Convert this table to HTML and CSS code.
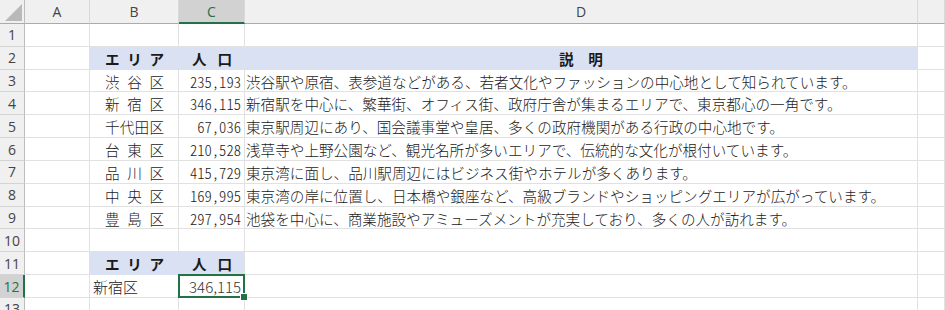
FILE: index.html
```html
<!DOCTYPE html>
<html lang="ja">
<head>
  <meta charset="UTF-8">
  <title>東京の区 - Sheet1</title>
  <link rel="stylesheet" href="styles.css">
</head>
<body>
  <div class="sheet">
    <!-- column headings -->
    <div class="corner"></div>
    <div class="colhead">A</div>
    <div class="colhead">B</div>
    <div class="colhead sel">C</div>
    <div class="colhead">D</div>
    <div class="colhead"></div>

    <div class="rowhead">1</div>
    <div class="cell"></div><div class="cell"></div><div class="cell"></div><div class="cell"></div><div class="cell"></div>

    <div class="rowhead">2</div>
    <div class="cell"></div>
    <div class="cell fill head dist"><span>エ</span><span>リ</span><span>ア</span></div>
    <div class="cell fill head dist num"><span>人</span><span>口</span></div>
    <div class="cell fill head center end">説　明</div>
    <div class="cell"></div>

    <div class="rowhead">3</div>
    <div class="cell"></div>
    <div class="cell dist"><span>渋</span><span>谷</span><span>区</span></div>
    <div class="cell right mono">235,193</div>
    <div class="cell text">渋谷駅や原宿、表参道などがある、若者文化やファッションの中心地として知られています。</div>
    <div class="cell"></div>

    <div class="rowhead">4</div>
    <div class="cell"></div>
    <div class="cell dist"><span>新</span><span>宿</span><span>区</span></div>
    <div class="cell right mono">346,115</div>
    <div class="cell text">新宿駅を中心に、繁華街、オフィス街、政府庁舎が集まるエリアで、東京都心の一角です。</div>
    <div class="cell"></div>

    <div class="rowhead">5</div>
    <div class="cell"></div>
    <div class="cell dist"><span>千</span><span>代</span><span>田</span><span>区</span></div>
    <div class="cell right mono">67,036</div>
    <div class="cell text">東京駅周辺にあり、国会議事堂や皇居、多くの政府機関がある行政の中心地です。</div>
    <div class="cell"></div>

    <div class="rowhead">6</div>
    <div class="cell"></div>
    <div class="cell dist"><span>台</span><span>東</span><span>区</span></div>
    <div class="cell right mono">210,528</div>
    <div class="cell text">浅草寺や上野公園など、観光名所が多いエリアで、伝統的な文化が根付いています。</div>
    <div class="cell"></div>

    <div class="rowhead">7</div>
    <div class="cell"></div>
    <div class="cell dist"><span>品</span><span>川</span><span>区</span></div>
    <div class="cell right mono">415,729</div>
    <div class="cell text">東京湾に面し、品川駅周辺にはビジネス街やホテルが多くあります。</div>
    <div class="cell"></div>

    <div class="rowhead">8</div>
    <div class="cell"></div>
    <div class="cell dist"><span>中</span><span>央</span><span>区</span></div>
    <div class="cell right mono">169,995</div>
    <div class="cell text">東京湾の岸に位置し、日本橋や銀座など、高級ブランドやショッピングエリアが広がっています。</div>
    <div class="cell"></div>

    <div class="rowhead">9</div>
    <div class="cell"></div>
    <div class="cell dist"><span>豊</span><span>島</span><span>区</span></div>
    <div class="cell right mono">297,954</div>
    <div class="cell text">池袋を中心に、商業施設やアミューズメントが充実しており、多くの人が訪れます。</div>
    <div class="cell"></div>

    <div class="rowhead">10</div>
    <div class="cell"></div><div class="cell"></div><div class="cell"></div><div class="cell"></div><div class="cell"></div>

    <div class="rowhead">11</div>
    <div class="cell"></div>
    <div class="cell fill head dist"><span>エ</span><span>リ</span><span>ア</span></div>
    <div class="cell fill head dist num end"><span>人</span><span>口</span></div>
    <div class="cell"></div>
    <div class="cell"></div>

    <div class="rowhead sel">12</div>
    <div class="cell"></div>
    <div class="cell plain">新宿区</div>
    <div class="cell plain right active">346,115</div>
    <div class="cell"></div>
    <div class="cell"></div>

    <div class="rowhead">13</div>
    <div class="cell"></div><div class="cell"></div><div class="cell"></div><div class="cell"></div><div class="cell"></div>
  </div>
</body>
</html>
```

FILE: styles.css
```css
* {
  box-sizing: border-box;
}
body {
  margin: 0;
  background: #fff;
  overflow: hidden;
}
.sheet {
  display: grid;
  grid-template-columns: 25px 65px 89px 66px 673px 1fr;
  grid-template-rows: 24px;
  grid-auto-rows: 22.83px;
  width: 945px;
  height: 310px;
  overflow: hidden;
  font-family: "Noto Sans CJK JP", sans-serif;
  font-size: 14.6px;
  color: #1a1a1a;
}
.cell {
  display: flex;
  align-items: center;
  padding: 1px 2px 0;
  border-right: 1px solid #e1e1e1;
  border-bottom: 1px solid #e1e1e1;
  white-space: nowrap;
  font-weight: 300;
}
.corner,
.colhead,
.rowhead {
  display: flex;
  align-items: center;
  justify-content: center;
  background: #f0f0f0;
  font-family: "Open Sans", "Noto Sans", sans-serif;
  font-size: 14px;
  color: #444;
}
.corner {
  position: relative;
  border-right: 1px solid #bdbdbd;
  border-bottom: 1px solid #ababab;
}
.corner::after {
  content: "";
  position: absolute;
  right: 2px;
  bottom: 2px;
  width: 17px;
  height: 17px;
  background: #b9b9b9;
  clip-path: polygon(100% 0, 100% 100%, 0 100%);
}
.colhead {
  border-right: 1px solid #d9d9d9;
  border-bottom: 1px solid #ababab;
}
.colhead.sel {
  background: #d2d2d2;
  color: #217346;
  border-bottom: 2px solid #217346;
}
.rowhead {
  border-right: 1px solid #bdbdbd;
  border-bottom: 1px solid #d4d4d4;
}
.rowhead.sel {
  background: #d2d2d2;
  color: #217346;
  border-right: 2px solid #217346;
}
.fill {
  background: #d9e1f2;
  border-right-color: #d9e1f2;
  border-bottom-color: #d9e1f2;
}
.fill.end {
  border-right-color: #e1e1e1;
}
.head {
  font-weight: 700;
}
.dist {
  justify-content: space-between;
  padding-left: 15px;
  padding-right: 14px;
}
.dist.num {
  padding-left: 13px;
  padding-right: 12px;
}
.center {
  justify-content: center;
}
.right {
  justify-content: flex-end;
}
.mono {
  font-feature-settings: "hwid" 1;
  padding-right: 3px;
}
.text {
  padding-left: 1px;
}
.plain {
  font-weight: 300;
  font-size: 15px;
  padding-left: 3px;
}
.active {
  position: relative;
  padding-right: 3px;
  color: #333;
}
.active::before {
  content: "";
  position: absolute;
  top: -1px;
  left: -1px;
  right: -1px;
  bottom: -1px;
  border: 2px solid #217346;
}
.active::after {
  content: "";
  position: absolute;
  right: -4px;
  bottom: -4px;
  width: 6px;
  height: 6px;
  background: #217346;
  border: 1px solid #fff;
}
```
